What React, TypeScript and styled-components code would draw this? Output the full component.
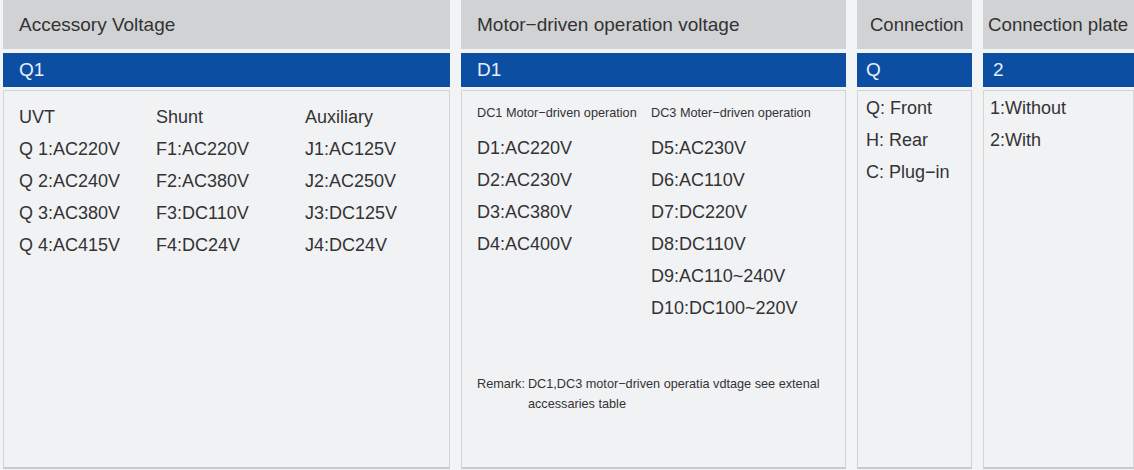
import styled, { createGlobalStyle } from "styled-components";

const GlobalStyle = createGlobalStyle`
  html, body {
    margin: 0;
    padding: 0;
    background: #f2f3f5;
    overflow: hidden;
  }
  body {
    font-family: "Liberation Sans", Arial, sans-serif;
    color: #333;
  }
`;

const accessory = [
  ["UVT", "Shunt", "Auxiliary"],
  ["Q 1:AC220V", "F1:AC220V", "J1:AC125V"],
  ["Q 2:AC240V", "F2:AC380V", "J2:AC250V"],
  ["Q 3:AC380V", "F3:DC110V", "J3:DC125V"],
  ["Q 4:AC415V", "F4:DC24V", "J4:DC24V"],
];

const dc1 = ["D1:AC220V", "D2:AC230V", "D3:AC380V", "D4:AC400V"];
const dc3 = [
  "D5:AC230V",
  "D6:AC110V",
  "D7:DC220V",
  "D8:DC110V",
  "D9:AC110~240V",
  "D10:DC100~220V",
];

const App = () => {
  return (
    <>
      <GlobalStyle />
      <Page>
        <Column $width={447}>
          <Header $pad={16}>Accessory Voltage</Header>
          <CodeBar $pad={16}>Q1</CodeBar>
          <Body $pad={16}>
            <AccessoryGrid>
              {accessory.flat().map((t, i) => (
                <Line key={i}>{t}</Line>
              ))}
            </AccessoryGrid>
          </Body>
        </Column>

        <Column $width={385}>
          <Header $pad={16}>Motor−driven operation voltage</Header>
          <CodeBar $pad={16}>D1</CodeBar>
          <Body $pad={16}>
            <MotorGrid>
              <MotorList>
                <SubHead>DC1 Motor−driven operation</SubHead>
                {dc1.map((t) => (
                  <Line key={t}>{t}</Line>
                ))}
              </MotorList>
              <MotorList>
                <SubHead>DC3 Moter−driven operation</SubHead>
                {dc3.map((t) => (
                  <Line key={t}>{t}</Line>
                ))}
              </MotorList>
            </MotorGrid>
            <Remark>
              <span>Remark:</span>
              <span>DC1,DC3 motor−driven operatia vdtage see extenal accessaries table</span>
            </Remark>
          </Body>
        </Column>

        <Column $width={115}>
          <Header $pad={13} $size={18.5}>Connection</Header>
          <CodeBar $pad={9}>Q</CodeBar>
          <Body $pad={9} $top={1}>
            <Line>Q: Front</Line>
            <Line>H: Rear</Line>
            <Line>C: Plug−in</Line>
          </Body>
        </Column>

        <Column $width={151}>
          <Header $pad={5} $size={18.7}>Connection plate</Header>
          <CodeBar $pad={10}>2</CodeBar>
          <Body $pad={7} $top={1}>
            <Line>1:Without</Line>
            <Line>2:With</Line>
          </Body>
        </Column>
      </Page>
    </>
  );
};

const Page = styled.div`
  display: flex;
  gap: 11px;
  padding-left: 3px;
  height: 470px;
  width: 1134px;
  box-sizing: border-box;
  overflow: hidden;
`;

const Column = styled.div<{ $width: number }>`
  display: flex;
  flex-direction: column;
  flex: 0 0 ${({ $width }) => $width}px;
  height: 469px;
`;

const Header = styled.div<{ $pad: number; $size?: number }>`
  display: flex;
  align-items: center;
  height: 49px;
  padding-left: ${({ $pad }) => $pad}px;
  padding-top: 1px;
  box-sizing: border-box;
  background: #d1d2d4;
  color: #333;
  font-size: ${({ $size }) => $size ?? 19}px;
  white-space: nowrap;
`;

const CodeBar = styled.div<{ $pad: number }>`
  display: flex;
  align-items: center;
  height: 34px;
  margin-top: 4px;
  padding-left: ${({ $pad }) => $pad}px;
  background: #0c4ea1;
  color: #e8eefa;
  font-size: 19px;
`;

const Body = styled.div<{ $pad: number; $top?: number }>`
  flex: 1;
  margin-top: 3px;
  padding: ${({ $top }) => $top ?? 10}px 8px 0 ${({ $pad }) => $pad - 1}px;
  background: #f1f2f4;
  border: 1px solid #d3d4d6;
  border-bottom: 2px solid #c9cacc;
  display: flex;
  flex-direction: column;
`;

const AccessoryGrid = styled.div`
  display: grid;
  grid-template-columns: 137px 149px 1fr;
`;

const Line = styled.div`
  height: 32px;
  line-height: 32px;
  font-size: 18px;
  color: #333;
  white-space: nowrap;
`;

const MotorGrid = styled.div`
  display: grid;
  grid-template-columns: 174px 1fr;
`;

const MotorList = styled.div`
  display: flex;
  flex-direction: column;
`;

const SubHead = styled.div`
  height: 31px;
  line-height: 24px;
  font-size: 12.7px;
  color: #333;
  white-space: nowrap;
`;

const Remark = styled.div`
  display: flex;
  gap: 3px;
  margin-top: 50px;
  font-size: 12.7px;
  line-height: 20px;
  color: #333;
  max-width: 350px;

  span:first-child {
    flex: none;
  }
`;

export default App;
